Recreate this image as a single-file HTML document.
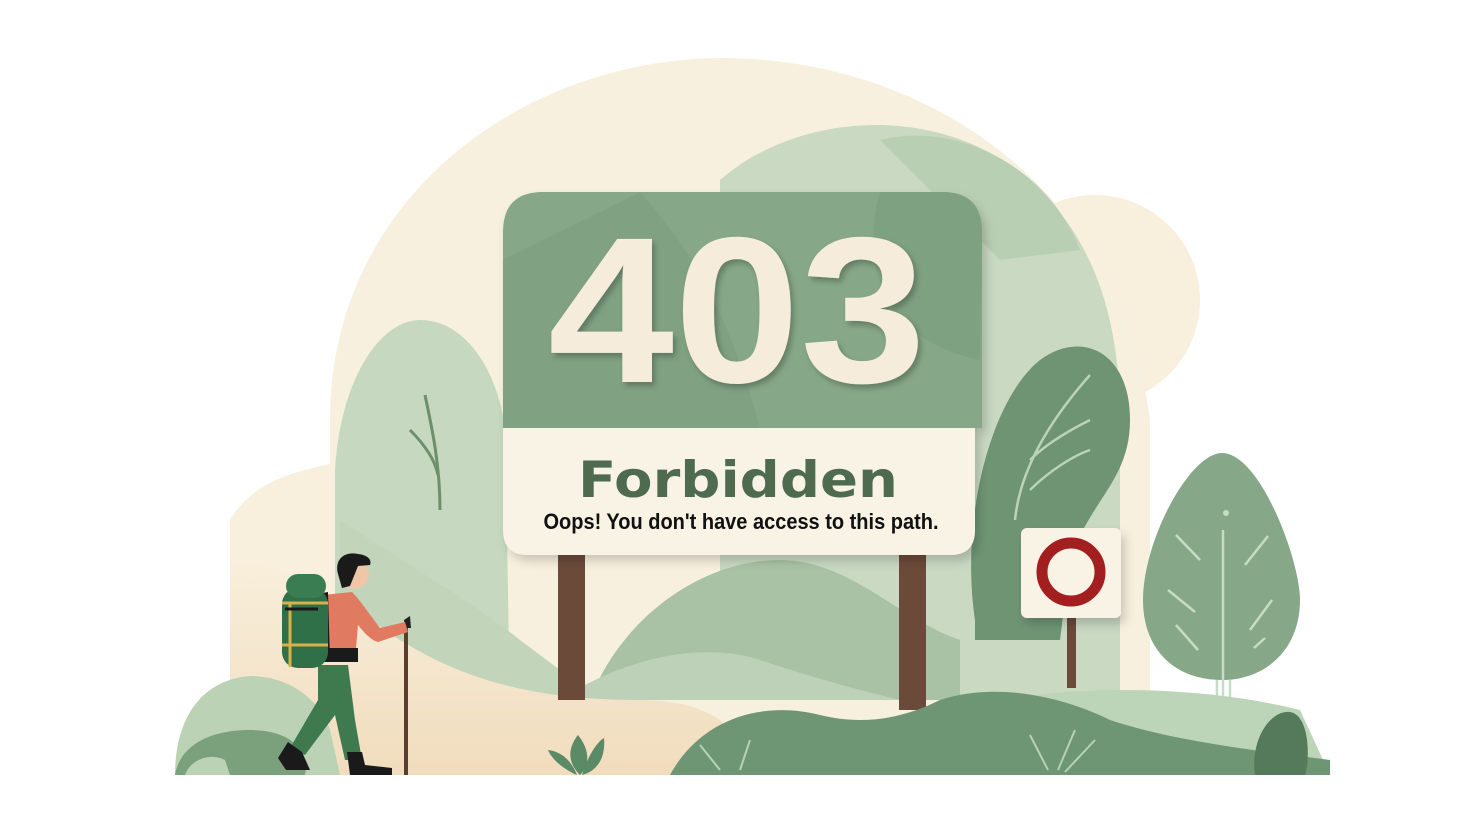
<!DOCTYPE html>
<html><head><meta charset="utf-8"><style>
html,body{margin:0;padding:0;background:#fff;width:1472px;height:832px;overflow:hidden}
svg{display:block}
</style></head><body>
<svg width="1472" height="832" viewBox="0 0 1472 832" xmlns="http://www.w3.org/2000/svg">
<defs>
<filter id="sh" x="-10%" y="-10%" width="130%" height="130%"><feDropShadow dx="4" dy="6" stdDeviation="5" flood-color="#000" flood-opacity="0.18"/></filter>
<filter id="sh2" x="-10%" y="-10%" width="130%" height="130%"><feDropShadow dx="3" dy="4" stdDeviation="3" flood-color="#000" flood-opacity="0.25"/></filter>
<linearGradient id="sand" x1="0" y1="0" x2="0" y2="1"><stop offset="0" stop-color="#f8efdc"/><stop offset="1" stop-color="#f1dcbd"/></linearGradient>
</defs>
<circle cx="1095" cy="300" r="105" fill="#f8efdc"/>
<path d="M330 420 C330 200 520 60 720 58 C930 58 1120 190 1150 420 L1150 775 L330 775 Z" fill="#f8f0de"/>
<path d="M230 520 C260 470 320 470 340 460 L340 775 L230 775 Z" fill="#f8efdc"/>
<path d="M720 180 C800 110 950 100 1040 190 C1100 250 1120 330 1120 420 L1120 700 L720 700 Z" fill="#c9d9c2"/>
<path d="M880 140 C960 120 1050 170 1080 250 L1000 260 Z" fill="#b9cfb3"/>
<path d="M335 470 C340 380 380 320 420 320 C470 320 500 380 505 430 L510 700 L335 700 Z" fill="#c6d8bf"/>
<path d="M340 520 C400 560 470 600 520 640 L600 700 L340 700 Z" fill="#c2d5bb"/>
<path d="M425 395 C430 420 440 460 440 510" stroke="#6d8f6c" stroke-width="3" fill="none"/>
<path d="M410 430 C425 445 435 460 438 475" stroke="#6d8f6c" stroke-width="3" fill="none"/>
<path d="M590 700 C620 620 700 560 780 560 C850 560 900 620 960 640 L960 700 Z" fill="#a9c2a5"/>
<path d="M560 700 C620 660 700 640 760 660 C820 680 860 690 900 700 Z" fill="#bcd1b7"/>
<path d="M230 775 L230 560 C280 560 340 600 400 640 C480 690 560 700 640 700 C700 700 740 720 760 775 Z" fill="url(#sand)"/>
<path d="M975 620 C960 520 990 400 1040 360 C1080 330 1130 350 1130 420 C1130 480 1090 500 1070 560 L1060 640 L975 640 Z" fill="#6f9474"/>
<path d="M1015 520 C1020 470 1050 420 1090 375 M1030 460 C1050 440 1080 425 1090 420 M1030 490 C1050 470 1075 455 1090 450" stroke="#b9d4b9" stroke-width="2.5" fill="none"/>
<rect x="558" y="550" width="27" height="150" fill="#6b4a3a"/>
<rect x="899" y="550" width="27" height="160" fill="#6b4a3a"/>
<g filter="url(#sh)">
<path d="M543 192 H942 Q982 192 982 232 V428 H503 V232 Q503 192 543 192 Z" fill="#86a888"/>
<path d="M503 428 H975 V530 Q975 555 950 555 H528 Q503 555 503 530 Z" fill="#f8f3e4"/>
</g>
<path d="M640 192 C700 260 730 320 760 428 L503 428 V260 Z" fill="#7d9f80" opacity="0.6"/>
<path d="M880 192 C860 260 880 340 980 360 L982 232 Q982 192 942 192 Z" fill="#7a9c7d" opacity="0.6"/>
<text x="737" y="382" text-anchor="middle" font-family="Liberation Sans, sans-serif" font-weight="bold" font-size="208" fill="#f6ecdc" textLength="378" lengthAdjust="spacingAndGlyphs" filter="url(#sh2)">403</text>
<text x="738" y="497" text-anchor="middle" font-family="DejaVu Sans, sans-serif" font-weight="bold" font-size="50" fill="#4e6a4f" textLength="320" lengthAdjust="spacingAndGlyphs">Forbidden</text>
<text x="741" y="529" text-anchor="middle" font-family="Liberation Sans Narrow, Liberation Sans, sans-serif" font-weight="bold" font-size="22" fill="#111" textLength="395" lengthAdjust="spacingAndGlyphs">Oops! You don't have access to this path.</text>
<rect x="1067" y="612" width="9" height="76" fill="#6b4a3a"/>
<rect x="1021" y="528" width="100" height="90" rx="6" fill="#f8f3e4" filter="url(#sh)"/>
<circle cx="1071" cy="572" r="29" fill="none" stroke="#a31f1f" stroke-width="11"/>
<path d="M1222 453 C1260 453 1300 560 1300 600 C1300 650 1265 680 1222 680 C1175 680 1143 650 1143 600 C1143 540 1190 453 1222 453 Z" fill="#86a888"/>
<path d="M1223 530 V700 M1217 680 V705 M1230 680 V705" stroke="#c6dcc4" stroke-width="2.5" fill="none"/>
<circle cx="1226" cy="513" r="3" fill="#c6dcc4"/>
<path d="M1176 535 L1200 560 M1245 565 L1268 536 M1168 590 L1195 612 M1176 625 L1198 650 M1250 630 L1272 600 M1254 648 L1265 638" stroke="#c6dcc4" stroke-width="2.5" fill="none"/>
<path d="M930 720 C980 700 1050 690 1120 690 C1200 690 1260 700 1300 710 L1330 775 L900 775 Z" fill="#bcd5b8"/>
<path d="M670 775 C700 720 760 700 820 715 C860 725 900 720 940 700 C1000 680 1070 700 1110 720 C1170 740 1250 750 1330 760 L1330 775 Z" fill="#6f9674"/>
<path d="M1255 775 C1250 740 1270 710 1290 712 C1310 715 1310 760 1305 775 Z" fill="#54795b"/>
<path d="M1030 735 L1048 770 M1075 730 L1058 770 M1095 740 L1065 772 M700 745 L720 770 M750 740 L740 770" stroke="#b5d3b3" stroke-width="2" fill="none"/>
<path d="M580 775 C565 760 570 745 578 735 C590 750 590 765 580 775 Z M582 775 C590 750 600 740 604 738 C606 760 595 772 582 775 Z M577 775 C565 770 552 760 548 750 C565 752 573 765 577 775 Z" fill="#5b8a66"/>
<path d="M175 775 C175 720 200 680 250 676 C290 676 320 700 330 730 L340 775 Z" fill="#bcd2b5"/>
<path d="M175 775 C180 745 210 730 250 730 C290 730 310 750 305 775 Z" fill="#7aa07c"/>
<path d="M185 775 C190 760 210 752 225 760 L230 775 Z" fill="#bcd2b5"/>
<g>
<rect x="404" y="622" width="4" height="153" fill="#5a3e2e"/>
<path d="M404 620 L410 616 L411 628 L405 628 Z" fill="#222"/>
<path d="M318 665 L348 665 L355 720 L362 760 L345 760 L335 715 L305 755 L290 748 L318 700 Z" fill="#3f7a4f"/>
<path d="M288 742 L302 752 L310 770 L286 770 L278 758 Z" fill="#1a1a1a"/>
<path d="M347 752 L362 752 L365 765 L392 768 L392 775 L350 775 Z" fill="#1a1a1a"/>
<path d="M323 595 L352 592 C360 600 370 615 380 628 L405 622 L408 632 L378 642 C370 640 362 630 358 625 L355 660 L322 662 Z" fill="#e07b62"/>
<rect x="316" y="648" width="42" height="14" fill="#1a1a1a"/>
<circle cx="354" cy="574" r="15" fill="#efc7a8"/>
<path d="M338 574 C334 558 346 551 358 554 C368 555 372 560 370 565 L358 566 L350 586 L342 588 Z" fill="#1a1a1a"/>
<path d="M312 595 L328 592 L330 660 L318 662 Z" fill="#1a1a1a"/>
<rect x="282" y="588" width="46" height="80" rx="16" fill="#2f7048"/>
<rect x="286" y="574" width="40" height="24" rx="12" fill="#3a7d52"/>
<path d="M282 603 H328 M282 645 H328 M290 604 V667" stroke="#d7b14a" stroke-width="3" fill="none"/>
<path d="M285 609 H318" stroke="#1a1a1a" stroke-width="3"/>
</g>
</svg>
</body></html>
